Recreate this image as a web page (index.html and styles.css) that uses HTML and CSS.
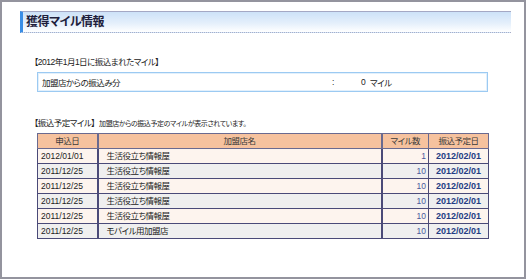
FILE: index.html
```html
<!DOCTYPE html>
<html lang="ja">
<head>
<meta charset="utf-8">
<link rel="stylesheet" href="styles.css">
</head>
<body>
<div class="frame">
  <div class="title-bar"><h1 class="title">獲得マイル情報</h1></div>
  <div class="content">
    <p class="label label-first">【2012年1月1日に振込まれたマイル】</p>
    <div class="summary">
      <span class="summary-name">加盟店からの振込み分</span>
      <span class="summary-colon">:</span>
      <span class="summary-num">0</span>
      <span class="summary-unit">マイル</span>
    </div>
    <p class="label label-second">【振込予定マイル】<span class="note">加盟店からの振込予定のマイルが表示されています。</span></p>
    <table class="miles">
      <thead>
        <tr><th class="c-date">申込日</th><th class="c-shop">加盟店名</th><th class="c-num">マイル数</th><th class="c-pay">振込予定日</th></tr>
      </thead>
      <tbody>
        <tr class="odd"><td>2012/01/01</td><td class="shop">生活役立ち情報屋</td><td class="num">1</td><td class="pay">2012/02/01</td></tr>
        <tr class="even"><td>2011/12/25</td><td class="shop">生活役立ち情報屋</td><td class="num">10</td><td class="pay">2012/02/01</td></tr>
        <tr class="odd"><td>2011/12/25</td><td class="shop">生活役立ち情報屋</td><td class="num">10</td><td class="pay">2012/02/01</td></tr>
        <tr class="even"><td>2011/12/25</td><td class="shop">生活役立ち情報屋</td><td class="num">10</td><td class="pay">2012/02/01</td></tr>
        <tr class="odd"><td>2011/12/25</td><td class="shop">生活役立ち情報屋</td><td class="num">10</td><td class="pay">2012/02/01</td></tr>
        <tr class="even"><td>2011/12/25</td><td class="shop">モバイル用加盟店</td><td class="num">10</td><td class="pay">2012/02/01</td></tr>
      </tbody>
    </table>
  </div>
</div>
</body>
</html>
```
FILE: styles.css
```css
* { box-sizing: border-box; }
html, body { margin: 0; padding: 0; background: #fff; }
body {
  font-family: "Liberation Sans", "Noto Sans CJK JP", sans-serif;
  font-size: 8.5px;
  font-feature-settings: "palt";
  color: #333;
}
.frame {
  width: 526px;
  height: 279px;
  border: 2px solid #94949e;
  padding: 9px 0 0 18px;
}
.title-bar {
  width: 491px;
  height: 22px;
  border-left: 3px solid #3a8ee6;
  border-top: 1px solid #a4a8c4;
  border-bottom: 1px dotted #a8aec8;
  background: linear-gradient(#cde2f8, #e4effb 55%, #ffffff);
  display: flex;
  align-items: center;
}
.title {
  margin: 0;
  padding-left: 3px;
  font-size: 12px;
  letter-spacing: -0.5px;
  font-weight: bold;
  color: #1e1e3c;
  line-height: 1;
}
.content { padding-left: 17px; }
.label { margin: 0; line-height: 12px; color: #222; letter-spacing: -0.5px; }
.label-first { margin-top: 23px; margin-left: -3px; }
.label-second { margin-top: 25px; margin-left: -3px; }
.note { font-size: 7px; margin-left: 4px; letter-spacing: -0.4px; }
.summary {
  margin-top: 4px;
  width: 451px;
  height: 20px;
  border: 1px solid #9ccaf2;
  box-shadow: inset 0 0 0 1px #e2f0fc;
  display: flex;
  align-items: center;
  padding-left: 4px;
  color: #222;
}
.summary-name { width: 290px; letter-spacing: -0.5px; }
.summary-colon { width: 29px; }
.summary-num { width: 9px; }
.summary-unit { letter-spacing: -0.5px; }
.miles {
  margin-top: 3px;
  width: 451px;
  border-collapse: collapse;
  table-layout: fixed;
  font-size: 8.5px;
}
.miles th, .miles td {
  border: 1px solid #4a4a78;
  height: 15px;
  padding: 0 3px;
  line-height: 12px;
  font-weight: normal;
  white-space: nowrap;
}
.miles th {
  background: #f6c29e;
  text-align: center;
  color: #3a3a3a;
  border-color: #6a6a90;
  letter-spacing: -0.5px;
}
.c-date { width: 60px; }
.c-shop { width: 284px; }
.c-num { width: 47px; }
.c-pay { width: 60px; }
.miles td { color: #222; }
.miles th.c-shop, .miles td.shop { border-left-width: 2px; }
.miles th.c-num, .miles td.num { border-left-width: 2px; }
.miles td.shop { padding-left: 8px; letter-spacing: -0.5px; }
.miles td.num { text-align: right; color: #4a5a9c; padding-right: 2px; }
.miles td.pay { font-weight: bold; font-size: 9px; color: #233c84; text-align: center; }
.odd td { background: #fdf4ee; }
.even td { background: #efefef; }
```
